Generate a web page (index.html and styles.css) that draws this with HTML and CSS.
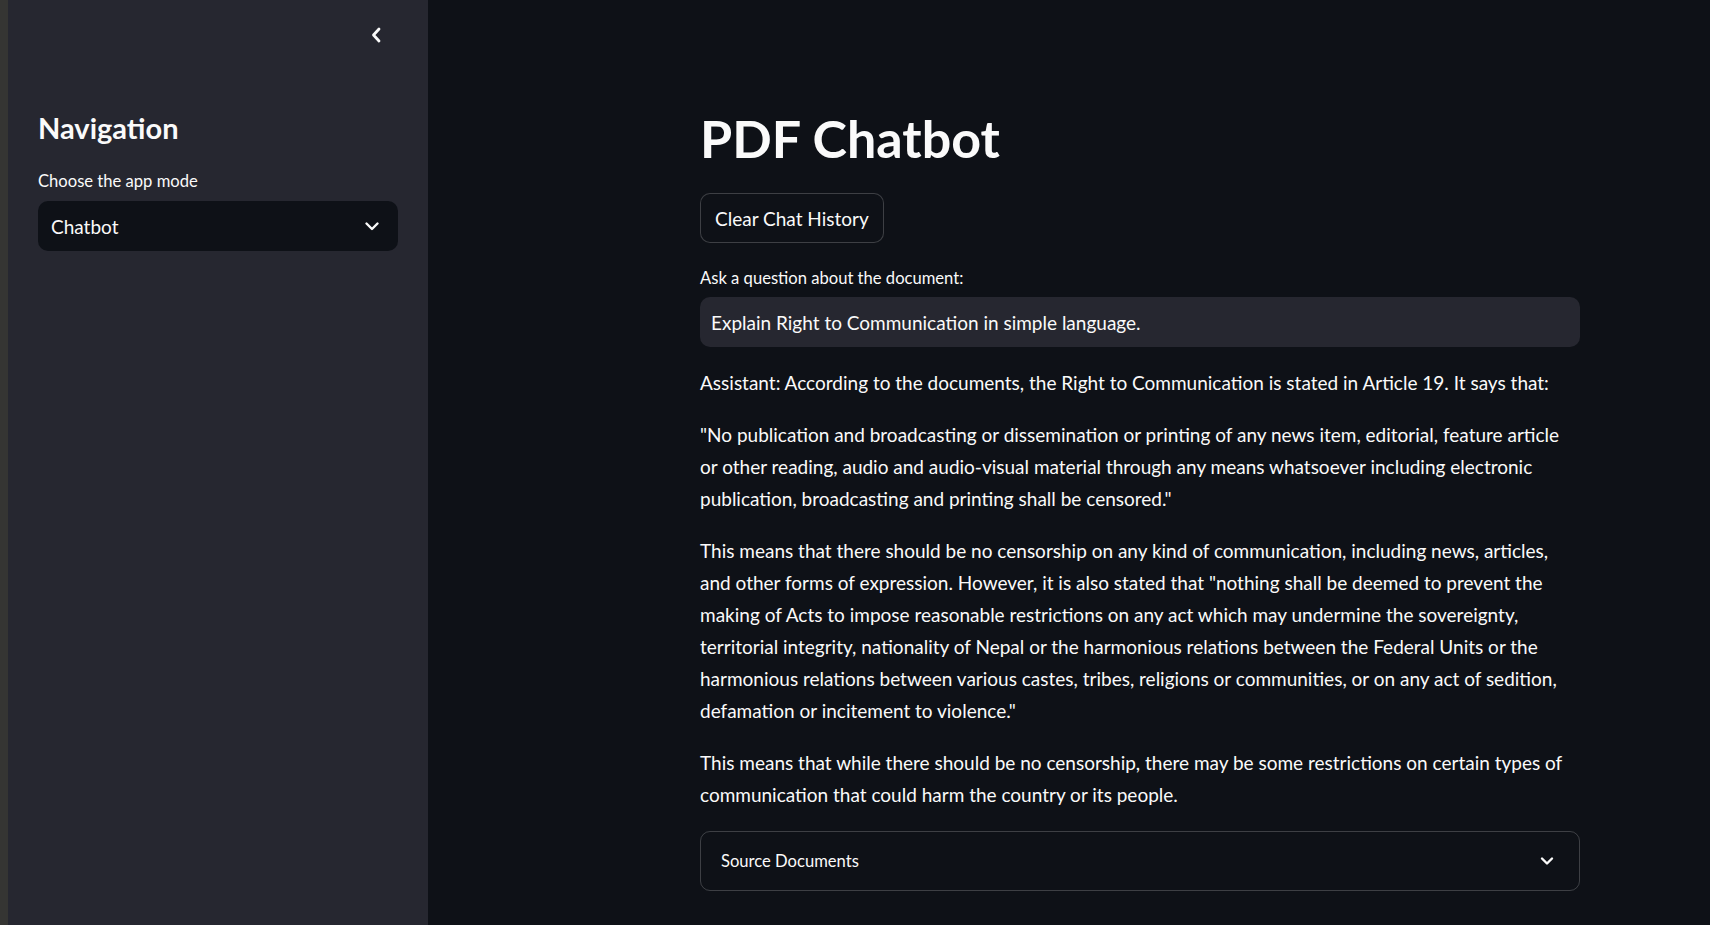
FILE: index.html
```html
<!DOCTYPE html>
<html lang="en">
<head>
<meta charset="utf-8">
<title>PDF Chatbot</title>
<link rel="stylesheet" href="styles.css">
</head>
<body>
<div class="strip"></div>
<aside class="sidebar">
  <div class="sidebar-top">
    <button class="collapse" aria-label="Collapse sidebar">
      <svg width="14" height="18" viewBox="0 0 14 18"><path d="M10 3 L4.5 9 L10 15" fill="none" stroke="#fafafa" stroke-width="2.8" stroke-linecap="round" stroke-linejoin="round"/></svg>
    </button>
  </div>
  <h2 class="nav-title">Navigation</h2>
  <label class="side-label">Choose the app mode</label>
  <div class="select">
    <span>Chatbot</span>
    <svg width="16" height="12" viewBox="0 0 16 12"><path d="M2.5 3.5 L8 9 L13.5 3.5" fill="none" stroke="#fafafa" stroke-width="2.4" stroke-linecap="round" stroke-linejoin="round"/></svg>
  </div>
</aside>
<main class="main">
  <div class="content">
    <h1 class="title">PDF Chatbot</h1>
    <button class="btn">Clear Chat History</button>
    <label class="q-label">Ask a question about the document:</label>
    <div class="input">Explain Right to Communication in simple language.</div>
    <div class="answer">
      <p>Assistant: According to the documents, the Right to Communication is stated in Article 19. It says that:</p>
      <p>"No publication and broadcasting or dissemination or printing of any news item, editorial, feature article or other reading, audio and audio-visual material through any means whatsoever including electronic publication, broadcasting and printing shall be censored."</p>
      <p>This means that there should be no censorship on any kind of communication, including news, articles, and other forms of expression. However, it is also stated that "nothing shall be deemed to prevent the making of Acts to impose reasonable restrictions on any act which may undermine the sovereignty, territorial integrity, nationality of Nepal or the harmonious relations between the Federal Units or the harmonious relations between various castes, tribes, religions or communities, or on any act of sedition, defamation or incitement to violence."</p>
      <p>This means that while there should be no censorship, there may be some restrictions on certain types of communication that could harm the country or its people.</p>
    </div>
    <div class="expander">
      <span>Source Documents</span>
      <svg width="16" height="12" viewBox="0 0 16 12"><path d="M3 3.5 L8 8.5 L13 3.5" fill="none" stroke="#fafafa" stroke-width="2.4" stroke-linecap="round" stroke-linejoin="round"/></svg>
    </div>
  </div>
</main>
</body>
</html>
```
FILE: styles.css
```css
* { box-sizing: border-box; }
html, body { margin: 0; height: 100%; }
body {
  display: flex;
  background: #0e1117;
  color: #fafafa;
  font-family: Lato, "Noto Sans", sans-serif;
  overflow: hidden;
}
.strip { width: 8px; flex: none; background: #353533; }
.sidebar {
  width: 420px;
  flex: none;
  background: #262730;
  padding: 0 30px 0 30px;
  display: flex;
  flex-direction: column;
}
.sidebar-top {
  height: 70px;
  display: flex;
  justify-content: flex-end;
  align-items: center;
}
.collapse {
  background: none;
  border: 0;
  padding: 0;
  margin-right: 15px;
  display: flex;
}
.nav-title {
  margin: 40px 0 0 0;
  font-size: 29px;
  font-weight: 700;
  line-height: 36px;
}
.side-label {
  margin-top: 24px;
  font-size: 16.6px;
  line-height: 22px;
}
.select {
  margin-top: 9px;
  height: 50px;
  border-radius: 10px;
  background: #0e1117;
  display: flex;
  align-items: center;
  justify-content: space-between;
  padding: 0 18px 0 13px;
  font-size: 19px;
}
.main { flex: 1; padding-left: 272px; }
.content { width: 880px; display: flex; flex-direction: column; align-items: flex-start; }
.title {
  margin: 105px 0 0 0;
  font-size: 52px;
  font-weight: 700;
  line-height: 66px;
}
.btn {
  margin-top: 22px;
  height: 50px;
  padding: 0 14px;
  background: #0e1117;
  color: #fafafa;
  border: 1px solid rgba(250,250,250,0.2);
  border-radius: 10px;
  font-family: inherit;
  font-size: 19px;
}
.q-label {
  margin-top: 24px;
  font-size: 16.6px;
  line-height: 22px;
}
.input {
  margin-top: 8px;
  width: 100%;
  height: 50px;
  background: #262730;
  border-radius: 10px;
  display: flex;
  align-items: center;
  padding: 0 11px;
  font-size: 19px;
}
.answer { margin-top: 20px; width: 100%; }
.answer p {
  margin: 0 0 20px 0;
  font-size: 19px;
  line-height: 32px;
}
.expander {
  margin-top: 0;
  width: 100%;
  height: 60px;
  border: 1px solid rgba(250,250,250,0.2);
  border-radius: 10px;
  display: flex;
  align-items: center;
  justify-content: space-between;
  padding: 0 24px 0 20px;
  font-size: 16.6px;
}
```
